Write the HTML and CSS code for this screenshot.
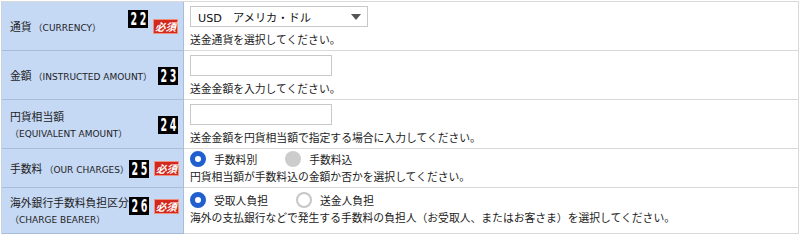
FILE: index.html
```html
<!DOCTYPE html>
<html lang="ja">
<head>
<meta charset="utf-8">
<title>送金内容</title>
<link rel="stylesheet" href="styles.css">
</head>
<body>
<div class="form">
  <div class="row">
    <div class="th">
      <div class="label"><span>通貨</span><span class="en">（CURRENCY）</span></div>
      <div class="badges"><span class="num num--top"><b>22</b></span><span class="req">必須</span></div>
    </div>
    <div class="td">
      <div class="select"><span>USD　アメリカ・ドル</span><span class="arrow"></span></div>
      <p class="help">送金通貨を選択してください。</p>
    </div>
  </div>
  <div class="row">
    <div class="th">
      <div class="label"><span>金額</span><span class="en">（INSTRUCTED AMOUNT）</span></div>
      <div class="badges"><span class="num"><b>23</b></span></div>
    </div>
    <div class="td">
      <div class="input"></div>
      <p class="help">送金金額を入力してください。</p>
    </div>
  </div>
  <div class="row">
    <div class="th">
      <div class="label"><span>円貨相当額</span><br><span class="en en--line">（EQUIVALENT AMOUNT）</span></div>
      <div class="badges"><span class="num"><b>24</b></span></div>
    </div>
    <div class="td">
      <div class="input"></div>
      <p class="help">送金金額を円貨相当額で指定する場合に入力してください。</p>
    </div>
  </div>
  <div class="row">
    <div class="th">
      <div class="label"><span>手数料</span><span class="en">（OUR CHARGES）</span></div>
      <div class="badges"><span class="num"><b>25</b></span><span class="req">必須</span></div>
    </div>
    <div class="td td--radio">
      <div class="radios">
        <span class="radio radio--on"></span><span class="rlabel">手数料別</span>
        <span class="radio radio--disabled"></span><span class="rlabel">手数料込</span>
      </div>
      <p class="help">円貨相当額が手数料込の金額か否かを選択してください。</p>
    </div>
  </div>
  <div class="row">
    <div class="th th--top">
      <div class="label"><span>海外銀行手数料負担区分</span><br><span class="en en--line">（CHARGE BEARER）</span></div>
      <div class="badges"><span class="num"><b>26</b></span><span class="req">必須</span></div>
    </div>
    <div class="td td--radio td--r5">
      <div class="radios">
        <span class="radio radio--on"></span><span class="rlabel">受取人負担</span>
        <span class="radio"></span><span class="rlabel">送金人負担</span>
      </div>
      <p class="help">海外の支払銀行などで発生する手数料の負担人（お受取人、またはお客さま）を選択してください。</p>
    </div>
  </div>
</div>
</body>
</html>
```
FILE: styles.css
```css
* { box-sizing: border-box; }
html, body { margin: 0; padding: 0; background: #ffffff; }
body {
  font-family: "DejaVu Sans", "Noto Sans CJK JP", sans-serif;
  font-size: 10.8px;
  color: #222;
}
.form {
  margin: 1px 1px 0 1px;
  border-top: 1px solid #d9d9d9;
  border-left: 1px solid #c9d3e0;
  border-right: 1px solid #d9d9d9;
}
.row {
  display: grid;
  grid-template-columns: 182px 1fr;
}
.th {
  background: #c5d8f4;
  border-right: 1px solid #a9bcd8;
  border-bottom: 1px solid #a9bcd8;
  padding: 6px 5px 5px 8px;
  display: flex;
  align-items: center;
}
.th--top { align-items: flex-start; }
.label {
  flex: 1;
  line-height: 16px;
  font-family: "Noto Sans CJK JP", sans-serif;
  white-space: nowrap;
  color: #1e1e1e;
}
.en {
  font-family: "DejaVu Sans", "Noto Sans CJK JP", sans-serif;
  font-size: 9px;
  margin-left: 2px;
}
.en--line { margin-left: 0; }
.badges {
  display: flex;
  align-items: center;
  gap: 5px;
  align-self: stretch;
}
.th--top .badges { align-self: flex-start; margin-top: 3px; }
.num {
  width: 20px;
  height: 18px;
  background: #000;
  color: #fff;
  display: flex;
  justify-content: center;
  align-items: center;
  overflow: hidden;
}
.num b {
  display: inline-block;
  font-family: "DejaVu Sans Condensed", "DejaVu Sans", sans-serif;
  font-weight: bold;
  font-size: 17px;
  line-height: 18px;
  letter-spacing: 4px;
  margin-right: -4px;
  transform: scaleX(0.62);
}
.num--top { align-self: flex-start; margin-top: 2px; }
.req {
  width: 25px;
  height: 15px;
  background: #d2291c;
  border: 1px solid #ee8f80;
  color: #fff;
  font-family: "Noto Sans CJK JP", sans-serif;
  font-weight: bold;
  font-style: italic;
  font-size: 10.5px;
  line-height: 13px;
  text-align: center;
}
.td {
  border-bottom: 1px solid #d9d9d9;
  padding: 4px 6px 2px 6px;
}
.td--radio { padding-top: 1px; }
.td--r5 { padding-top: 3px; }
.select {
  width: 178px;
  height: 21px;
  border: 1px solid #c8c8c8;
  background: #fff;
  display: flex;
  align-items: center;
  justify-content: space-between;
  padding: 0 6px 0 7px;
  color: #111;
  font-size: 11.2px;
}
.arrow {
  width: 0;
  height: 0;
  border-left: 5px solid transparent;
  border-right: 5px solid transparent;
  border-top: 6px solid #555;
}
.input {
  width: 142px;
  height: 21px;
  border: 1px solid #c8c8c8;
  background: #fff;
}
.help {
  margin: 4px 0 0 0;
  line-height: 17px;
  font-family: "Noto Sans CJK JP", sans-serif;
  white-space: nowrap;
}
.td--radio .help { margin-top: 0; }
.radios {
  display: flex;
  align-items: center;
  height: 18px;
  font-family: "Noto Sans CJK JP", sans-serif;
}
.radio {
  width: 16px;
  height: 16px;
  border-radius: 50%;
  border: 2px solid #c6c6c6;
  background: #fff;
  margin-right: 8px;
}
.rlabel + .radio { margin-left: 28px; }
.radio--on {
  border: 5px solid #1f5fce;
}
.radio--disabled {
  border: none;
  background: #cccccc;
}
```
